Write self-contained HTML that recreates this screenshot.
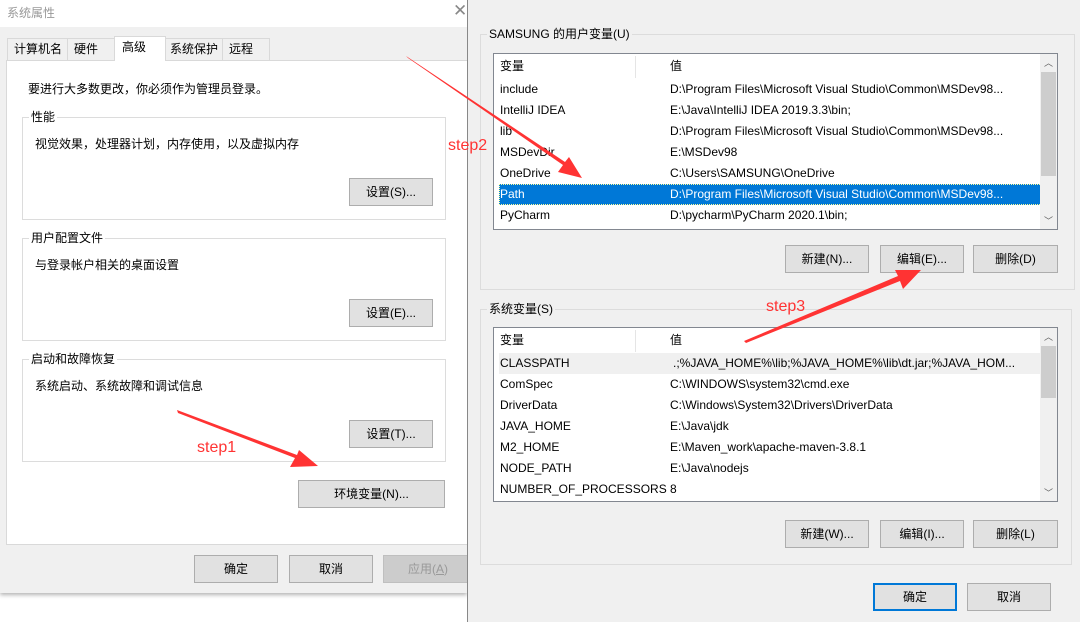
<!DOCTYPE html><html><head><meta charset="utf-8"><style>
*{margin:0;padding:0;box-sizing:border-box}
body{width:1080px;height:622px;position:relative;overflow:hidden;background:#fff;font-family:"Liberation Sans","Noto Sans CJK SC",sans-serif;font-size:12px;color:#000}
.a{position:absolute}
.btn{position:absolute;background:#e1e1e1;border:1px solid #adadad;text-align:center;line-height:26px;font-size:12px}
.grp{position:absolute;border:1px solid #dcdcdc}
.lbl{position:absolute;background:inherit;padding:0 2px;font-size:12px;line-height:14px}
.list{position:absolute;background:#fff;border:1px solid #828790;overflow:hidden}
.row{position:absolute;left:6px;height:21px;line-height:21px;font-size:12px;white-space:nowrap;width:543px}
.row span{position:absolute;left:170px}
.sb{position:absolute;right:0;top:0;bottom:0;width:17px;background:#f0f0f0}
.sb .th{position:absolute;left:1px;right:1px;background:#cdcdcd}
.sb .u,.sb .d{position:absolute;left:0;width:17px;text-align:center;color:#606060;font-size:9px}
</style></head><body>
<!-- left dialog -->
<div class="a" style="left:0;top:0;width:467px;height:593px;background:#f0f0f0;box-shadow:0 2px 4px rgba(0,0,0,.3)"></div>
<div class="a" style="left:0;top:0;width:467px;height:27px;background:#fff"></div>
<div class="a" style="left:7px;top:4px;color:#999;font-size:12px">系统属性</div>
<div class="a" style="left:453px;top:1px;color:#888;font-size:17px">✕</div>
<div class="a" style="left:6px;top:60px;width:470px;height:485px;background:#fff;border:1px solid #d9d9d9"></div>
<div class="a" style="left:7px;top:38px;width:61px;height:23px;border:1px solid #d9d9d9;background:#f0f0f0;line-height:21px;padding-left:6px">计算机名</div>
<div class="a" style="left:67px;top:38px;width:48px;height:23px;border:1px solid #d9d9d9;background:#f0f0f0;line-height:21px;padding-left:6px">硬件</div>
<div class="a" style="left:114px;top:36px;width:52px;height:25px;border:1px solid #d9d9d9;border-bottom:none;background:#fff;line-height:21px;padding-left:7px">高级</div>
<div class="a" style="left:165px;top:38px;width:58px;height:23px;border:1px solid #d9d9d9;background:#f0f0f0;line-height:21px;padding-left:4px">系统保护</div>
<div class="a" style="left:222px;top:38px;width:48px;height:23px;border:1px solid #d9d9d9;background:#f0f0f0;line-height:21px;padding-left:6px">远程</div>
<div class="a" style="left:28px;top:80px">要进行大多数更改，你必须作为管理员登录。</div>
<div class="grp" style="left:22px;top:117px;width:424px;height:103px;background:#fff"></div>
<div class="lbl" style="left:29px;top:110px;background:#fff">性能</div>
<div class="a" style="left:35px;top:135px">视觉效果，处理器计划，内存使用，以及虚拟内存</div>
<div class="btn" style="left:349px;top:178px;width:84px;height:28px">设置(S)...</div>
<div class="grp" style="left:22px;top:238px;width:424px;height:103px;background:#fff"></div>
<div class="lbl" style="left:29px;top:231px;background:#fff">用户配置文件</div>
<div class="a" style="left:35px;top:256px">与登录帐户相关的桌面设置</div>
<div class="btn" style="left:349px;top:299px;width:84px;height:28px">设置(E)...</div>
<div class="grp" style="left:22px;top:359px;width:424px;height:103px;background:#fff"></div>
<div class="lbl" style="left:29px;top:352px;background:#fff">启动和故障恢复</div>
<div class="a" style="left:35px;top:377px">系统启动、系统故障和调试信息</div>
<div class="btn" style="left:349px;top:420px;width:84px;height:28px">设置(T)...</div>
<div class="btn" style="left:298px;top:480px;width:147px;height:28px">环境变量(N)...</div>
<div class="btn" style="left:194px;top:555px;width:84px;height:28px">确定</div>
<div class="btn" style="left:289px;top:555px;width:84px;height:28px">取消</div>
<div class="btn" style="left:383px;top:555px;width:90px;height:28px;background:#ccc;border-color:#bfbfbf;color:#999">应用(<u>A</u>)</div>
<!-- right dialog -->
<div class="a" style="left:467px;top:0;width:613px;height:622px;background:#f0f0f0;border-left:1px solid #888"></div>
<div class="grp" style="left:480px;top:34px;width:595px;height:256px"></div>
<div class="lbl" style="left:487px;top:27px;background:#f0f0f0">SAMSUNG 的用户变量(U)</div>
<div class="list" style="left:493px;top:53px;width:565px;height:177px">
<div class="a" style="left:0;top:0;width:548px;height:25px;border-bottom:0"></div>
<div class="a" style="left:141px;top:2px;width:1px;height:22px;background:#e5e5e5"></div>
<div class="row" style="top:2px">变量<span style="left:170px">值</span></div>
<div class="row" style="top:25px">include<span>D:\Program Files\Microsoft Visual Studio\Common\MSDev98...</span></div>
<div class="row" style="top:46px">IntelliJ IDEA<span>E:\Java\IntelliJ IDEA 2019.3.3\bin;</span></div>
<div class="row" style="top:67px">lib<span>D:\Program Files\Microsoft Visual Studio\Common\MSDev98...</span></div>
<div class="row" style="top:88px">MSDevDir<span>E:\MSDev98</span></div>
<div class="row" style="top:109px">OneDrive<span>C:\Users\SAMSUNG\OneDrive</span></div>
<div class="row" style="top:130px;left:5px;background:#0078d7;color:#fff;outline:1px dotted #ff9;outline-offset:-1px;padding-left:1px">Path<span style="left:171px">D:\Program Files\Microsoft Visual Studio\Common\MSDev98...</span></div>
<div class="row" style="top:151px">PyCharm<span>D:\pycharm\PyCharm 2020.1\bin;</span></div>
<div class="sb"><div class="u" style="top:2px">︿</div><div class="th" style="top:18px;height:104px"></div><div class="d" style="bottom:2px">﹀</div></div>
</div>
<div class="btn" style="left:785px;top:245px;width:84px;height:28px">新建(N)...</div>
<div class="btn" style="left:880px;top:245px;width:84px;height:28px">编辑(E)...</div>
<div class="btn" style="left:973px;top:245px;width:85px;height:28px">删除(D)</div>
<div class="grp" style="left:480px;top:309px;width:592px;height:256px"></div>
<div class="lbl" style="left:487px;top:302px;background:#f0f0f0">系统变量(S)</div>
<div class="list" style="left:493px;top:327px;width:565px;height:175px">
<div class="a" style="left:141px;top:2px;width:1px;height:22px;background:#e5e5e5"></div>
<div class="row" style="top:2px">变量<span>值</span></div>
<div class="row" style="top:25px;left:5px;padding-left:1px;background:#f0f0f0">CLASSPATH<span style="left:174px">.;%JAVA_HOME%\lib;%JAVA_HOME%\lib\dt.jar;%JAVA_HOM...</span></div>
<div class="row" style="top:46px">ComSpec<span>C:\WINDOWS\system32\cmd.exe</span></div>
<div class="row" style="top:67px">DriverData<span>C:\Windows\System32\Drivers\DriverData</span></div>
<div class="row" style="top:88px">JAVA_HOME<span>E:\Java\jdk</span></div>
<div class="row" style="top:109px">M2_HOME<span>E:\Maven_work\apache-maven-3.8.1</span></div>
<div class="row" style="top:130px">NODE_PATH<span>E:\Java\nodejs</span></div>
<div class="row" style="top:151px">NUMBER_OF_PROCESSORS<span>8</span></div>
<div class="sb"><div class="u" style="top:2px">︿</div><div class="th" style="top:18px;height:52px"></div><div class="d" style="bottom:2px">﹀</div></div>
</div>
<div class="btn" style="left:785px;top:520px;width:84px;height:28px">新建(W)...</div>
<div class="btn" style="left:880px;top:520px;width:84px;height:28px">编辑(I)...</div>
<div class="btn" style="left:973px;top:520px;width:85px;height:28px">删除(L)</div>
<div class="btn" style="left:873px;top:583px;width:84px;height:28px;border:2px solid #0078d7;line-height:24px">确定</div>
<div class="btn" style="left:967px;top:583px;width:84px;height:28px">取消</div>
<!-- annotations -->
<svg class="a" style="left:0;top:0" width="1080" height="622">
<g fill="#f33">
<polygon points="406,56 408,58 563,165 558,172 582,178 569,157 565,162"/>
<polygon points="744,341 746,343 900,281 903,289 921,270 895,270 898,276"/>
<polygon points="177,410 178,413 295,458 290,467 318,466 299,450 297,455"/>
</g>
<g fill="#f33" font-family="Liberation Sans, sans-serif" font-size="16">
<text x="448" y="150">step2</text>
<text x="766" y="311">step3</text>
<text x="197" y="452">step1</text>
</g>
</svg>
</body></html>
